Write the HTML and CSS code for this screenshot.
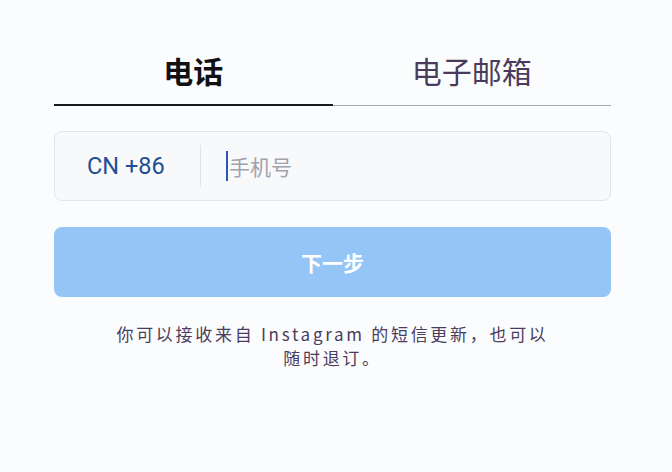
FILE: index.html
```html
<!DOCTYPE html>
<html lang="zh-CN">
<head>
<meta charset="utf-8">
<title>注册</title>
<link rel="stylesheet" href="styles.css">
</head>
<body>
<div class="page">
  <div class="tabs">
    <div class="tab active">电话</div>
    <div class="tab">电子邮箱</div>
  </div>
  <div class="phone">
    <div class="cc">CN +86</div>
    <div class="sep"></div>
    <div class="field"><span class="caret"></span><span class="ph">手机号</span></div>
  </div>
  <div class="next">下一步</div>
  <p class="note">你可以接收来自 Instagram 的短信更新，也可以<br>随时退订。</p>
</div>
</body>
</html>
```
FILE: styles.css
```css
html, body {
  margin: 0;
  padding: 0;
  background: #fbfcfd;
}
body {
  font-family: "Noto Sans", "Noto Sans CJK SC", sans-serif;
  width: 672px;
  height: 472px;
  overflow: hidden;
}
.page {
  padding: 50px 61px 0 54px;
}
.tabs {
  display: flex;
  align-items: flex-end;
}
.tab {
  flex: 1;
  text-align: center;
  font-family: "Noto Sans CJK SC", sans-serif;
  font-size: 30px;
  line-height: 40px;
  padding-bottom: 15px;
  color: #4a3b5c;
  border-bottom: 1px solid #a9a9ae;
}
.tab.active {
  color: #111114;
  font-weight: 700;
  padding-bottom: 14px;
  border-bottom: 2px solid #16181c;
}
.phone {
  margin-top: 25px;
  height: 70px;
  box-sizing: border-box;
  border: 1px solid #e3e5ea;
  border-radius: 8px;
  background: #f8f9fb;
  display: flex;
  align-items: center;
}
.cc {
  width: 145px;
  box-sizing: border-box;
  padding-left: 32px;
  font-family: Roboto, "Noto Sans", sans-serif;
  font-size: 23.5px;
  color: #1e4f93;
}
.sep {
  width: 1px;
  height: 42px;
  background: #dfe1e6;
}
.field {
  margin-left: 25px;
  display: flex;
  align-items: center;
}
.caret {
  display: block;
  width: 2px;
  height: 30px;
  background: #2b57b3;
}
.ph {
  margin-left: 1px;
  font-family: "Noto Sans CJK SC", sans-serif;
  font-size: 21px;
  color: #a3a2ad;
}
.next {
  margin-top: 26px;
  height: 70px;
  border-radius: 8px;
  background: #95c5f7;
  color: #ffffff;
  font-family: "Noto Sans CJK SC", sans-serif;
  font-weight: 700;
  font-size: 21px;
  display: flex;
  align-items: center;
  justify-content: center;
}
.note {
  margin: 25px 0 0;
  text-align: center;
  font-family: "Noto Sans CJK SC", sans-serif;
  font-size: 17px;
  letter-spacing: 2.7px;
  line-height: 24px;
  color: #4b3d5d;
}
```
